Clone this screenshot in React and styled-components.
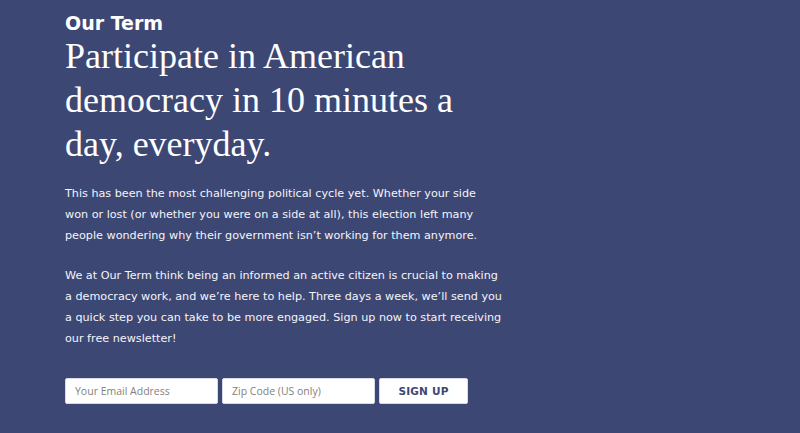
import React from "react";
import styled, { createGlobalStyle } from "styled-components";

const GlobalStyle = createGlobalStyle`
html, body {
  margin: 0;
  padding: 0;
  background: #3d4774;
}
`;

const Page = styled.div`
min-height: 433px;
background: #3d4774;
padding: 12px 0 0 65px;
box-sizing: border-box;
`;

const Content = styled.div`
width: 440px;
color: #ffffff;
`;

const Brand = styled.div`
font-family: "DejaVu Sans", sans-serif;
font-weight: bold;
font-size: 19px;
line-height: 22px;
`;

const Headline = styled.h1`
font-family: "Liberation Serif", serif;
font-weight: normal;
font-size: 36px;
line-height: 44px;
margin: 0 0 17px 0;
width: 400px;
`;

const Paragraph = styled.p`
font-family: "DejaVu Sans", sans-serif;
font-size: 11.2px;
line-height: 21px;
margin: 0 0 19px 0;
width: 437px;
color: #f4f4f8;
`;

const Form = styled.form`
display: flex;
gap: 4px;
margin-top: 29px;
`;

const Field = styled.input`
width: 153px;
height: 26px;
box-sizing: border-box;
border: 1px solid #d8dbe6;
border-radius: 2px;
padding: 0 9px;
font-family: "Open Sans", sans-serif;
font-size: 10.5px;
color: #333;
&::placeholder {
  color: #857f7a;
}
`;

const Button = styled.button`
width: 89px;
height: 26px;
border: 1px solid #d8dbe6;
border-radius: 2px;
background: #ffffff;
color: #3d4774;
font-family: "DejaVu Sans", sans-serif;
font-weight: bold;
font-size: 10.5px;
letter-spacing: 0.2px;
cursor: pointer;
`;

const App = () => {
  return (
    <Page>
      <GlobalStyle />
      <Content>
        <Brand>Our Term</Brand>
        <Headline>
          Participate in American democracy in 10 minutes a day, everyday.
        </Headline>
        <Paragraph>
          This has been the most challenging political cycle yet. Whether your
          side won or lost (or whether you were on a side at all), this election
          left many people wondering why their government isn’t working for them
          anymore.
        </Paragraph>
        <Paragraph>
          We at Our Term think being an informed an active citizen is crucial to
          making a democracy work, and we’re here to help. Three days a week,
          we’ll send you a quick step you can take to be more engaged. Sign up
          now to start receiving our free newsletter!
        </Paragraph>
        <Form onSubmit={(e) => e.preventDefault()}>
          <Field type="email" placeholder="Your Email Address" />
          <Field type="text" placeholder="Zip Code (US only)" />
          <Button type="submit">SIGN UP</Button>
        </Form>
      </Content>
    </Page>
  );
};

export default App;
